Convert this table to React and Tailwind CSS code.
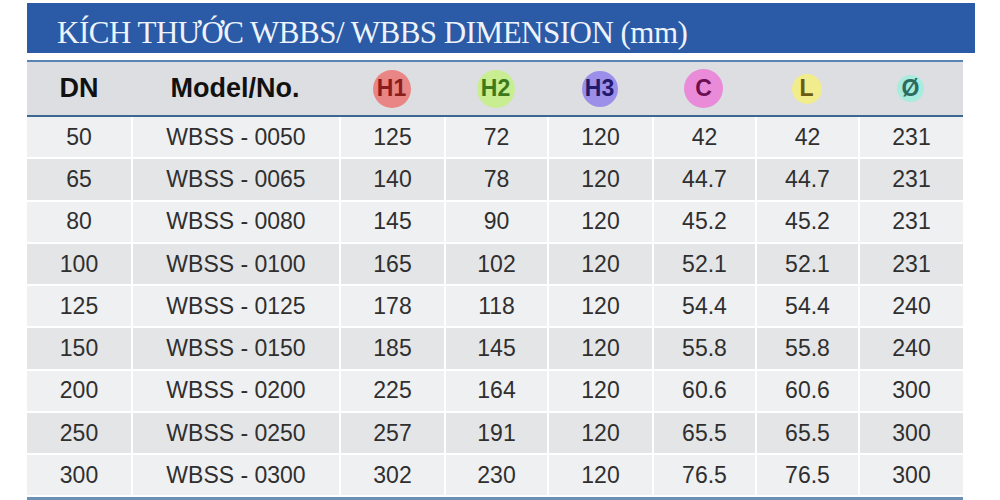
const columns = ["DN", "Model/No.", "H1", "H2", "H3", "C", "L", "Ø"];

const badges = {
  H1: { bg: "bg-[#e98585]", text: "text-[#8a1c1c]", size: "w-[38px] h-[38px]" },
  H2: { bg: "bg-[#c9ee92]", text: "text-[#3d7a1c]", size: "w-[38px] h-[38px]" },
  H3: { bg: "bg-[#9b8fe9]", text: "text-[#23196b]", size: "w-[36px] h-[36px]" },
  C: { bg: "bg-[#e98bd9]", text: "text-[#6b0f50]", size: "w-[39px] h-[39px]" },
  L: { bg: "bg-[#f1ec8c]", text: "text-[#6b5a12]", size: "w-[30px] h-[30px]" },
  "Ø": { bg: "bg-[#a8ebdf]", text: "text-[#2c6b5d]", size: "w-[27px] h-[27px]" },
};

const rows = [
  ["50", "WBSS - 0050", "125", "72", "120", "42", "42", "231"],
  ["65", "WBSS - 0065", "140", "78", "120", "44.7", "44.7", "231"],
  ["80", "WBSS - 0080", "145", "90", "120", "45.2", "45.2", "231"],
  ["100", "WBSS - 0100", "165", "102", "120", "52.1", "52.1", "231"],
  ["125", "WBSS - 0125", "178", "118", "120", "54.4", "54.4", "240"],
  ["150", "WBSS - 0150", "185", "145", "120", "55.8", "55.8", "240"],
  ["200", "WBSS - 0200", "225", "164", "120", "60.6", "60.6", "300"],
  ["250", "WBSS - 0250", "257", "191", "120", "65.5", "65.5", "300"],
  ["300", "WBSS - 0300", "302", "230", "120", "76.5", "76.5", "300"],
];

const gridCols = "grid grid-cols-[104px_208px_105px_103px_105px_103px_103px_105px]";

function HeaderCell({ label }) {
  const badge = badges[label];
  if (!badge) {
    return (
      <div className="flex items-center justify-center text-[27px] font-bold text-[#111111]">
        {label}
      </div>
    );
  }
  return (
    <div className="flex items-center justify-center">
      <div
        className={`flex items-center justify-center rounded-full ${badge.bg} ${badge.size}`}
      >
        <span className={`text-[23px] font-bold ${badge.text}`}>{label}</span>
      </div>
    </div>
  );
}

export default function App() {
  return (
    <div
      className="w-[1000px] h-[500px] bg-white overflow-hidden pt-[3px] pl-[27px]"
      style={{ fontFamily: '"Liberation Sans", Arial, sans-serif' }}
    >
      {/* Title bar */}
      <div className="w-[948px] h-[50px] bg-[#2b5ba7] flex items-center pl-[30px] pt-[8px]">
        <h1
          className="text-[31px] text-[#eef3fb] leading-none tracking-[-0.5px]"
          style={{ fontFamily: '"Liberation Serif", "Times New Roman", serif' }}
        >
          KÍCH THƯỚC WBBS/ WBBS DIMENSION (mm)
        </h1>
      </div>

      {/* Table */}
      <div className="w-[936px] mt-[7px]">
        <div
          className={`${gridCols} h-[57px] bg-[#dcdee1] border-t-[2px] border-[#5784b4] border-b-[2px] border-b-[#3d6791]`}
        >
          {columns.map((c) => (
            <HeaderCell key={c} label={c} />
          ))}
        </div>

        {rows.map((row, i) => (
          <div
            key={row[0]}
            className={`${gridCols} h-[42.25px] border-b-[2px] border-white ${
              i % 2 === 0 ? "bg-[#eff0f2]" : "bg-[#e4e5e7]"
            }`}
          >
            {row.map((cell, j) => (
              <div
                key={j}
                className={`flex items-center justify-center text-[23px] text-[#2f2f2f] ${
                  j > 0 ? "border-l-[2px] border-white" : ""
                }`}
              >
                {cell}
              </div>
            ))}
          </div>
        ))}
        <div className="h-[3px] bg-[#6b8fb5]" />
      </div>
    </div>
  );
}
